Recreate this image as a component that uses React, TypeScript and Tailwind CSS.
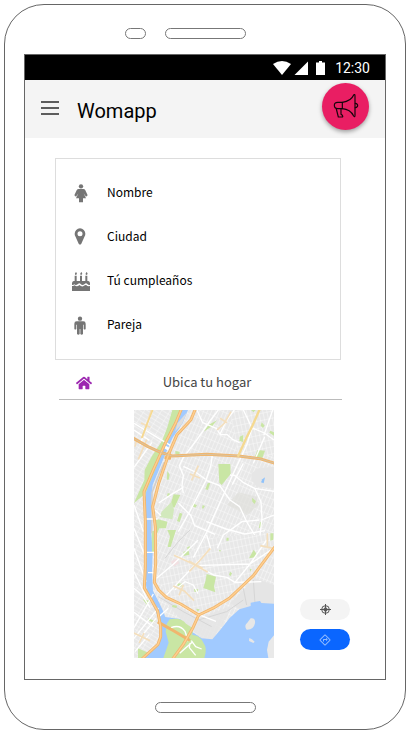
import type { ReactNode } from "react";
import { FaHome } from "react-icons/fa";
import { MdOutlineDirections } from "react-icons/md";

function WomanIcon() {
  return (
    <svg width="14" height="19" viewBox="27 14 42 57" fill="currentColor" aria-hidden="true">
      <circle cx="48" cy="21" r="6.500" />
      <path d="M41 29H55Q59 29 61 33L68 48L63 52L56 42L63 57H54V69H42V57H33L40 42L33 52L28 48L35 33Q37 29 41 29Z" />
    </svg>
  );
}

function PinIcon() {
  return (
    <svg width="12" height="18" viewBox="55 224 36 54" fill="currentColor" fillRule="evenodd" className="mr-[2px]" aria-hidden="true">
      <path d="M77 271Q73 276 69 271L59 249Q57 246 57 241A16 16 0 0 1 89 241Q89 246 87 249ZM73 234A7.500 7.500 0 1 0 73 249A7.500 7.500 0 1 0 73 234Z" />
    </svg>
  );
}

function CakeIcon() {
  return (
    <svg width="18" height="19" viewBox="18 18 54 57" fill="currentColor" aria-hidden="true">
      <path d="M30 18Q36 25 29 27Q24 24 30 18ZM46 18Q52 25 45 27Q40 24 46 18ZM62 18Q68 25 61 27Q56 24 62 18Z" />
      <path d="M26 29H32V45H42V29H48V45H58V29H64V45H67Q72 46 72 52V56Q68 58 64 54Q60 50 56 54Q49 60 44 54Q40 50 36 54Q29 60 25 55Q21 58 18 56V52Q18 46 23 45H26Z" />
      <path d="M18 60Q23 61 26 58Q33 64 40 57Q48 64 53 60Q60 54 64 60Q68 61 72 60V75H18Z" />
    </svg>
  );
}

function ManIcon() {
  return (
    <svg width="12" height="19" viewBox="27 152 36 57" fill="currentColor" className="mr-[2px]" aria-hidden="true">
      <circle cx="45" cy="160" r="6.500" />
      <path d="M35 168H55Q62 168 62 175V191Q59 194 56 191V178H54V206Q50 210 46 206V191H44V206Q40 210 36 206V178H34V191Q31 194 28 191V175Q28 168 35 168Z" />
    </svg>
  );
}

const fields: { label: string; icon: ReactNode }[] = [
  { label: "Nombre", icon: <WomanIcon /> },
  { label: "Ciudad", icon: <PinIcon /> },
  { label: "Tú cumpleaños", icon: <CakeIcon /> },
  { label: "Pareja", icon: <ManIcon /> },
];

function StatusBar() {
  return (
    <div className="flex h-[25px] items-center justify-end bg-black pr-[15px] text-white">
      <svg width="52" height="14" viewBox="0 0 52 14" fill="currentColor" aria-hidden="true">
        <path d="M0 3Q9-3 18 3L9 14Z" />
        <path d="M21.500 14L35 0.500V14Z" />
        <path d="M43 1.500H46V0H49V1.500H52V14H43Z" />
      </svg>
      <span className="ml-[10px] font-[Roboto,sans-serif] text-sm">12:30</span>
    </div>
  );
}

function Megaphone() {
  return (
    <svg width="26" height="26" viewBox="277 133 78 78" fill="none" stroke="#16050b" strokeWidth="3.500" strokeLinejoin="round" strokeLinecap="round" aria-hidden="true">
      <path d="M305 158H291Q281 158 281 167Q281 177 291 177H305Z" />
      <path d="M305 158C320 156 334 148 339 136Q343 132 343 139V197Q343 204 339 199C333 187 320 178 305 177" />
      <path d="M344 161Q351 162 351 167.500Q351 173 344 174M287 178L293 202H304Q308 202 305 197L301 194V178" />
    </svg>
  );
}

function Crosshair() {
  return (
    <svg width="11" height="11" viewBox="0 0 33 33" fill="none" stroke="#555" strokeWidth="3" aria-hidden="true">
      <circle cx="16.500" cy="16.500" r="11.500" />
      <circle cx="16.500" cy="16.500" r="5" fill="#555" />
      <path d="M16.500 0V33M0 16.500H33" />
    </svg>
  );
}

function CityMap() {
  return (
    <svg width="140" height="248" viewBox="12 15 420 744" role="img" aria-label="Mapa" className="block">
      <defs>
        <pattern id="blocks" width="11" height="23" patternUnits="userSpaceOnUse" patternTransform="rotate(23)">
          <path d="M0 0V23M0 0H11" stroke="#fafafa" strokeWidth="3" />
        </pattern>
        <pattern id="blocksWest" width="12" height="22" patternUnits="userSpaceOnUse" patternTransform="rotate(-58)">
          <path d="M0 0V22M0 0H12" stroke="#fafafa" strokeWidth="3" />
        </pattern>
        <pattern id="blocksEast" width="12" height="21" patternUnits="userSpaceOnUse" patternTransform="rotate(-12)">
          <path d="M0 0V21M0 0H12" stroke="#fafafa" strokeWidth="3" />
        </pattern>
      </defs>
      <rect x="12" y="15" width="420" height="744" fill="#e8e8e8" />
      <rect x="12" y="15" width="420" height="744" fill="url(#blocks)" />
      <path d="M12 15H150L85 150L45 260V550L92 650V759H12Z" fill="#e8e8e8" />
      <path d="M12 15H150L85 150L45 260V550L92 650V759H12Z" fill="url(#blocksWest)" />
      <path d="M300 15H432V150L325 150Z" fill="#e8e8e8" />
      <path d="M300 15H432V150L325 150Z" fill="url(#blocksEast)" />
      <path d="M240 400L432 380V430L300 580L205 625L110 570L85 510Z" fill="#e8e8e8" />
      <path d="M240 400L432 380V430L300 580L205 625L110 570L85 510Z" fill="url(#blocksEast)" />

      {/* rail yards and unbuilt ground */}
      <path d="M385 190L432 185V250L380 245Q360 225 365 205Z" fill="#e6e6e6" />
      <path d="M325 262L380 275L385 300L352 330L290 300Z" fill="#e0e0dc" fillOpacity="0.7" />
      <path d="M375 520L432 540V610L330 612L300 595Z" fill="#e5e5e5" />
      <path d="M90 570L205 640L285 610L310 600L250 702H220L165 660Z" fill="#e5e5e5" fillOpacity="0.8" />
      <path d="M105 460Q150 400 180 375M85 575L160 620L245 665M340 550L350 600M370 525L375 595M205 645L290 620L340 585" stroke="#d6d6d6" strokeWidth="3" fill="none" />
      <path d="M122 470L140 460L148 475L132 484Z" fill="#f2e0e2" />

      {/* water */}
      <path d="M153 15H174L158 55L128 98L105 150L88 192L68 240L64 285V385L68 440L66 500L69 558L85 588L99 617L106 636L150 642L166 658L184 679L215 700L247 703L270 676L299 639L328 613L362 603V593L390 588L394 594L432 596V759H38L84 718L93 695L90 648L52 565L48 540V390L44 285L50 250L86 157L111 98Z" fill="#a1caff" />
      <path d="M432 691L416 710L411 735L415 759H432Z" fill="#e9e9e9" />
      <path d="M362 640Q377 638 375 655Q371 675 350 674Q341 662 352 653ZM358 699L366 703L374 710L370 714L357 708Z" fill="#e7e7e7" />
      <path d="M397 223L405 217L401 235L393 232Z" fill="#8fc2fb" />

      {/* parks */}
      <g fill="#c9e6a4">
        <path d="M127 15H150L137 63L98 140L46 266L12 294L43 225L44 195L66 153L96 108L112 67Z" />
        <path d="M265 177H301L302 207L275 240L268 233Z" />
        <path d="M383 135L405 137L397 159L374 156Z" />
        <path d="M131 268L151 270L133 308L120 303ZM149 323L157 326L149 351L141 348ZM80 342L112 350L108 370H88L79 391H72V343Z" />
        <path d="M112 375H138L122 426H113L120 394ZM65 378H76V441L66 440Z" />
        <path d="M230 507L258 515L252 544L256 562L220 549L227 526Z" />
        <path d="M371 434L380 447L376 457L357 460ZM160 440L176 437L178 449L161 453ZM172 426L180 424L181 433L172 434Z" />
        <path d="M113 265H119V274H111ZM112 197L119 209L116 224H110ZM189 295L201 301L196 308L187 304ZM233 235L241 233L234 255L226 253ZM218 300L225 303L219 312L216 309ZM366 278L378 288L374 297L367 290ZM390 350L397 356L391 370L387 368Z" />
        <path d="M329 95L340 90L339 111L328 107ZM395 52L404 62L399 69L392 62ZM363 15H377L371 22ZM421 77L432 82V92L418 83ZM136 138L149 140L148 151L136 148ZM261 46L246 64L221 80L236 59Z" />
        <path d="M421 385H430V404L421 407ZM300 500L306 505L302 513L297 510ZM359 491L365 493L361 500ZM192 552L205 553L202 561L193 560ZM290 398H296V407H289ZM266 434L273 436L270 441ZM141 535L158 536L154 545L143 543ZM128 600L142 602L138 609L126 606ZM198 611L209 613L204 620Z" />
        <path d="M119 643Q154 637 168 656L189 670L187 690Q210 690 221 715Q233 730 223 759H100L116 713L107 680L110 657Z" />
        <path d="M24 730L58 745L39 759H24ZM55 640L75 648L69 653L54 645ZM38 583L60 588L51 600Z" />
      </g>
      <path d="M125 290L132 315L127 343L89 336L95 320Z" fill="#d2e9bc" />
      <path d="M171 22L156 57L135 80L142 55Z" fill="#dedede" />
      <path d="M103 172L86 210L66 263L65 385" fill="none" stroke="#cfcfcf" strokeWidth="5" />

      {/* main streets */}
      <g fill="none" stroke="#ffffff" strokeWidth="4" strokeLinejoin="round">
        <path d="M265 15L242 45L200 105L159 159L148 182L160 211L156 242L160 265M201 15L218 53L259 70L271 89H292L309 104L329 113" />
        <path d="M313 15L290 45L270 88M363 67L403 84L432 105M367 67L350 120L307 212L270 292L230 382L190 458M404 95L370 175M340 15L365 67" />
        <path d="M247 152L242 184L228 226L180 318L145 380M160 184L196 201L226 222M228 226L269 242L300 285L329 305L350 350L374 390M300 210L315 212L339 232L374 250L393 290L396 340L390 390M374 250L432 259M428 15L402 90M340 175L307 239" />
        <path d="M86 294L128 266L160 247M75 315L93 332M40 342H83M145 294L183 332L194 362L255 388M229 350L289 372L344 387L405 377M388 345L336 350L280 390L262 430M230 390L242 430L192 482L108 572M134 450L194 478L251 510L291 517L315 532L394 530M192 482L360 477L432 429M315 532L360 477L410 405M50 442H78M54 503H76M80 520L130 478L204 406M109 575L182 619L258 649M135 554L165 530L190 540L204 566M394 345L432 330" />
        <path d="M12 55L78 95L121 121M12 75L58 106M66 20L30 120M12 187L66 112M12 550L38 572L60 608M12 668L70 567M12 700L85 609M12 622L70 665M30 700L78 640M85 637L115 610M15 740L58 688M12 500L50 580M12 430L48 530M12 370L48 460M12 300L40 380" />
        <path d="M123 668Q150 657 165 679L175 709M149 745L188 710M184 707L197 725L215 732M180 714L178 728L197 751" />
      </g>
      <path d="M100 122L116 133" stroke="#ffffff" strokeWidth="9" />

      {/* secondary avenues */}
      <g fill="none" stroke="#f4dfbd" strokeWidth="5">
        <path d="M64 15L50 60L37 99M33 54L61 67M20 104L15 125M50 104L25 163M303 20L283 55L261 75M270 40L291 53M205 182L185 226M180 207L210 219M132 451L183 474L233 501M241 430L208 468L178 499M176 468L218 490M130 543L163 558L192 587M160 540L147 571M12 684L60 707M42 684L28 714M412 385V430M391 422L432 430" />
      </g>
      <path d="M68 15L50 60L35 99" fill="none" stroke="#f5d991" strokeWidth="5" />

      {/* highways */}
      <g fill="none" strokeLinejoin="round" strokeLinecap="square">
        <g stroke="#f0b66e" strokeWidth="9">
          <path d="M153 15L137 54L108 110L68 199L42 260L46 350V485L43 549L63 583L83 619L92 665V695L84 718L39 759" />
          <path d="M195 15L183 44L141 89L117 145L86 235L68 305L76 365L77 473L73 532L86 555L109 577L152 597L206 630" />
          <path d="M12 101L54 125L92 142L126 153L230 148L326 153L389 161L432 174" />
          <path d="M432 429L395 478L370 512L337 543L298 580L254 607L206 630L188 670L160 718L130 759" />
          <path d="M87 653L132 678L176 704M117 145L119 160L108 158" />
        </g>
        <g stroke="#ffcf91" strokeWidth="4">
          <path d="M153 15L137 54L108 110L68 199L42 260L46 350V485L43 549L63 583L83 619L92 665V695L84 718L39 759" />
          <path d="M195 15L183 44L141 89L117 145L86 235L68 305L76 365L77 473L73 532L86 555L109 577L152 597L206 630" />
          <path d="M432 429L395 478L370 512L337 543L298 580L254 607L206 630L188 670L160 718L130 759" />
        </g>
        <path d="M12 101L54 125L92 142L126 153L230 148L326 153L389 161L432 174" stroke="#d9c3a1" strokeWidth="3" />
        <path d="M388 15L368 61L349 99L325 152" stroke="#f5d991" strokeWidth="7" />
      </g>
    </svg>
  );
}

export default function App() {
  return (
    <div className="bg-white pt-1 pr-px pb-[2px] pl-1">
      <div className="rounded-[40px] border border-[#666] px-[19px]">
        <div className="flex h-[49px] items-center justify-center gap-[19px] pt-2" aria-hidden="true">
          <span className="h-[11px] w-[21px] rounded-full border border-[#777]" />
          <span className="h-[11px] w-[81px] rounded-full border border-[#777]" />
          <span className="w-[21px]" />
        </div>

        <div className="border border-[#666] pb-[21px]">
          <StatusBar />
          <header className="flex h-[58px] items-center bg-[#f4f4f4] px-4">
            <button type="button" aria-label="Menú" className="mb-[2px] flex w-[18px] flex-col gap-1">
              <span className="h-[2px] bg-[#5c5c5c]" />
              <span className="h-[2px] bg-[#5c5c5c]" />
              <span className="h-[2px] bg-[#5c5c5c]" />
            </button>
            <h1 className="ml-[18px] pt-1 font-[Roboto,sans-serif] text-xl leading-6 text-black">Womapp</h1>
            <button
              type="button"
              aria-label="Alerta"
              className="mt-[3px] ml-auto flex size-[47px] items-center justify-center self-start rounded-full bg-[#e91e63] shadow-[0_2px_4px_rgba(0,0,0,0.35)]"
            >
              <Megaphone />
            </button>
          </header>

          <main className="pt-5 font-['Noto_Sans_CJK_SC',sans-serif]">
            <ul className="mr-11 ml-[30px] border border-[#ddd] px-4 py-3">
              {fields.map(({ label, icon }) => (
                <li key={label} className="flex h-11 items-center gap-[17px] text-xs text-black">
                  <span className="flex w-[18px] justify-center text-[#757575]">{icon}</span>
                  <span className="pb-[2px]">{label}</span>
                </li>
              ))}
            </ul>

            <div className="mr-[43px] ml-[34px] flex h-10 items-center border-b border-[#bbb] pt-[6px] pr-5 pl-[17px]">
              <FaHome size={16} className="text-[#9c27b0]" />
              <h2 className="flex-1 pb-[2px] text-center text-[13px] text-[#444]">Ubica tu hogar</h2>
            </div>

            <div className="mt-[10px] flex items-end justify-end gap-[26px] pr-[35px]">
              <CityMap />
              <div className="flex flex-col gap-[9px] pb-2">
                <button type="button" aria-label="Mi ubicación" className="flex h-[21px] w-[50px] items-center justify-center rounded-full bg-[#f4f4f4]">
                  <Crosshair />
                </button>
                <button type="button" aria-label="Cómo llegar" className="flex h-[21px] w-[50px] items-center justify-center rounded-full bg-[#0a66ff] text-[#8fbaff]">
                  <MdOutlineDirections size={12} />
                </button>
              </div>
            </div>
          </main>
        </div>

        <div className="flex h-[49px] items-center justify-center pt-[6px]" aria-hidden="true">
          <span className="h-[11px] w-[101px] rounded-full border border-[#777]" />
        </div>
      </div>
    </div>
  );
}
